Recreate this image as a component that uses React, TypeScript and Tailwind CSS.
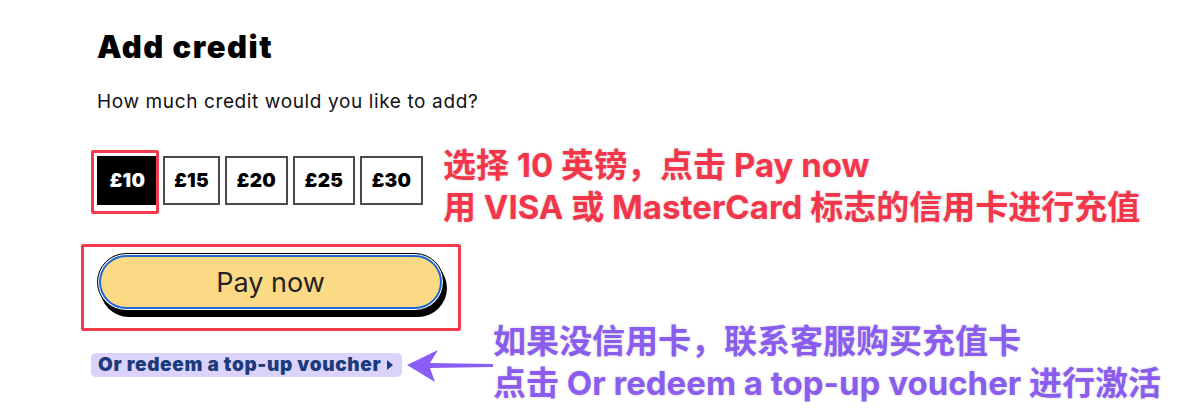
import React from "react";

const amounts = [
  { label: "£10", w: "w-[61px]", selected: true },
  { label: "£15", w: "w-[57px]", selected: false },
  { label: "£20", w: "w-[63px]", selected: false },
  { label: "£25", w: "w-[62px]", selected: false },
  { label: "£30", w: "w-[63px]", selected: false },
];

export default function App() {
  return (
    <div className="relative w-[1200px] h-[411px] overflow-hidden bg-white font-['Inter',sans-serif] text-black">
      <div className="flex flex-col items-start pl-[97px] pt-[28px]">
        <h1 className="text-[31px] leading-[37px] font-black tracking-[1.5px]">Add credit</h1>
        <p className="mt-[25px] text-[19px] leading-[24px] tracking-[0.62px] text-[#111]">How much credit would you like to add?</p>
        <div className="mt-[42px] flex gap-[5px]">
          {amounts.map((a) => (
            <div
              key={a.label}
              className={`${a.w} h-[49px] flex items-center justify-center pt-[2px] border-2 text-[19px] font-black tracking-[0.3px] ${
                a.selected ? "bg-black border-black text-white" : "bg-white border-[#4a4a4a] text-black"
              }`}
            >
              {a.label}
            </div>
          ))}
        </div>
        <button className="mt-[48px] w-[347px] h-[58px] rounded-full border border-black bg-[#fbd985] shadow-[inset_0_0_0_1px_#fff,inset_0_0_0_3px_#1f66d6,3px_6px_0_0_#000] text-[27px] leading-none text-[#222] flex items-center justify-center">
          Pay now
        </button>
        <div className="mt-[42px] -ml-[6px] h-[24px] flex items-center gap-[6px] rounded-[5px] bg-[#dcd3fd] pl-[7px] pr-[9px] text-[19px] font-black tracking-[0.65px] text-[#1b3b7c]">
          <span>Or redeem a top-up voucher</span>
          <svg width="6" height="10" viewBox="0 0 6 10">
            <path d="M0 0 L6 5 L0 10 Z" fill="#1b3b7c" />
          </svg>
        </div>
      </div>

      {/* annotations */}
      <div className="absolute left-[91px] top-[150px] w-[68px] h-[64px] border-[3px] border-[#f23b4b] rounded-[2px]" />
      <div className="absolute left-[81px] top-[244px] w-[380px] h-[87px] border-[3px] border-[#f23b4b] rounded-[2px]" />

      <div className="absolute left-[443px] top-[144px] text-[33px] leading-[42px] font-bold text-[#f5364a] font-['Inter','Noto_Sans_CJK_SC',sans-serif] [text-shadow:0_0_3px_rgba(0,0,0,0.18)] whitespace-nowrap">
        <div>选择 10 英镑，点击 Pay now</div>
        <div>用 VISA 或 MasterCard 标志的信用卡进行充值</div>
      </div>

      <svg className="absolute left-[405px] top-[347px]" width="90" height="38" viewBox="0 0 90 38">
        <path d="M2 18 L33 3 L25 16 L88 17 L88 20 L25 21 L30 35 Z" fill="#8b5cf6" />
      </svg>

      <div className="absolute left-[493px] top-[320px] text-[33px] leading-[42px] font-bold text-[#8b5cf0] font-['Inter','Noto_Sans_CJK_SC',sans-serif] [text-shadow:0_0_3px_rgba(0,0,0,0.18)] whitespace-nowrap">
        <div>如果没信用卡，联系客服购买充值卡</div>
        <div>点击 Or redeem a top-up voucher 进行激活</div>
      </div>
    </div>
  );
}
